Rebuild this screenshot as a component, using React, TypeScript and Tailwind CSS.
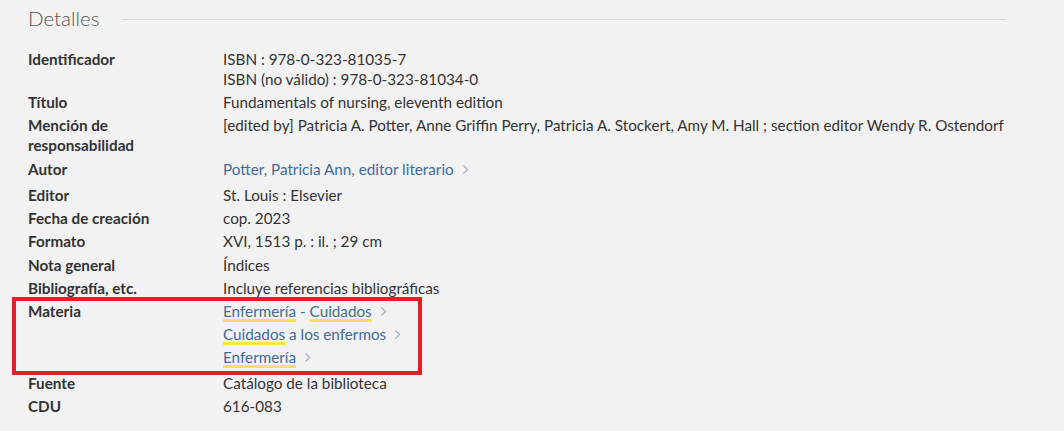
import { ReactNode } from "react";

type Row = { label: ReactNode; value: ReactNode; pad?: string };

const Hl = ({ children }: { children: ReactNode }) => (
  <span className="underline decoration-[#fbe05a] decoration-[3px] underline-offset-[2px]">{children}</span>
);

const Chevron = () => (
  <svg width="7" height="11" viewBox="0 0 7 11" className="ml-2 inline-block" fill="none">
    <path d="M1.5 1.5 5.5 5.5 1.5 9.5" stroke="#a9b5c2" strokeWidth="1.4" />
  </svg>
);

const LinkLine = ({ children }: { children: ReactNode }) => (
  <div className="h-[23px] flex items-start">
    <a href="#" className="text-[#3f6c98] flex items-center h-5">
      <span>{children}</span>
      <Chevron />
    </a>
  </div>
);

const rows: Row[] = [
  {
    label: "Identificador",
    value: (
      <>
        <div>ISBN : 978-0-323-81035-7</div>
        <div>ISBN (no válido) : 978-0-323-81034-0</div>
      </>
    ),
  },
  { label: "Título", value: "Fundamentals of nursing, eleventh edition" },
  {
    label: (
      <>
        Mención de
        <br />
        responsabilidad
      </>
    ),
    value:
      "[edited by] Patricia A. Potter, Anne Griffin Perry, Patricia A. Stockert, Amy M. Hall ; section editor Wendy R. Ostendorf",
  },
  { label: "Autor", value: <LinkLine>Potter, Patricia Ann, editor literario</LinkLine>, pad: "pt-px" },
  { label: "Editor", value: "St. Louis : Elsevier" },
  { label: "Fecha de creación", value: "cop. 2023" },
  { label: "Formato", value: "XVI, 1513 p. : il. ; 29 cm" },
  { label: "Nota general", value: "Índices", pad: "pt-px" },
  { label: "Bibliografía, etc.", value: "Incluye referencias bibliográficas" },
  {
    label: "Materia",
    value: (
      <>
        <LinkLine>
          <Hl>Enfermería</Hl> - <Hl>Cuidados</Hl>
        </LinkLine>
        <LinkLine>
          <Hl>Cuidados</Hl> a los enfermos
        </LinkLine>
        <LinkLine>
          <Hl>Enfermería</Hl>
        </LinkLine>
      </>
    ),
  },
  { label: "Fuente", value: "Catálogo de la biblioteca" },
  { label: "CDU", value: "616-083" },
];

export default function App() {
  return (
    <div className="relative w-[1064px] h-[431px] overflow-hidden bg-[#f2f2f2] font-['Lato',sans-serif] text-[#333] text-[15.25px] leading-5">
      {/* ================= HEADER ================= */}
      <div className="flex items-center gap-[22px] pl-[28px] pr-[58px] pt-[6px] h-[30px]">
        <h2 className="text-[20.5px] font-light text-[#555] leading-[26px]">Detalles</h2>
        <div className="flex-1 h-px bg-[#d9d9d9] mt-[2px]" />
      </div>

      {/* ================= ROWS ================= */}
      <div className="grid grid-cols-[195px_1fr] gap-y-[3px] pl-[28px] pt-[19px]">
        {rows.map((row, i) => (
          <div key={i} className="contents">
            <div className={`font-bold ${row.pad ?? ""}`}>{row.label}</div>
            <div className={row.pad ?? ""}>{row.value}</div>
          </div>
        ))}
      </div>

      {/* highlight box */}
      <div className="absolute left-[12px] top-[297px] w-[410px] h-[78px] border-4 border-[#e41e26] pointer-events-none" />
    </div>
  );
}
